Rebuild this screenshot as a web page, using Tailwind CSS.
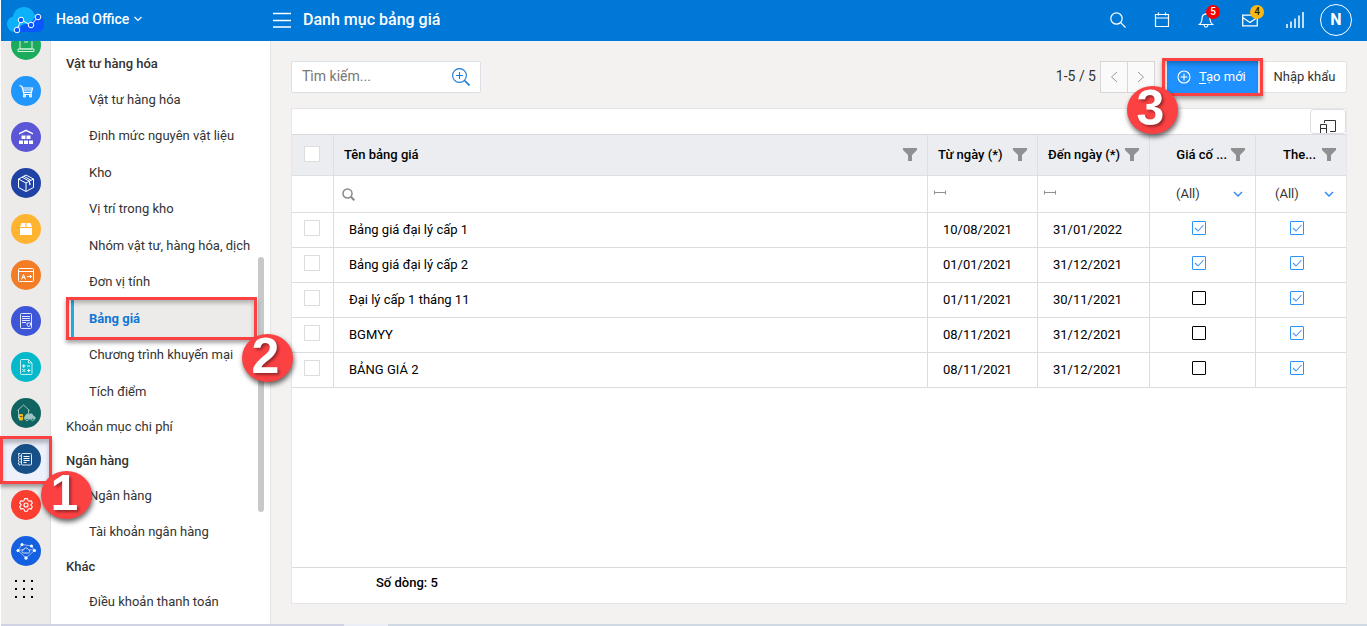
<!DOCTYPE html>
<html lang="vi">
<head>
<meta charset="utf-8">
<title>Danh mục bảng giá</title>
<script src="https://cdn.jsdelivr.net/npm/@tailwindcss/browser@4"></script>
</head>
<body class="relative flex h-screen flex-col overflow-hidden bg-white pl-px font-[Roboto,'Liberation_Sans',sans-serif] text-[13px] text-[#333]">

<svg class="hidden" xmlns="http://www.w3.org/2000/svg">
  <symbol id="funnel" viewBox="0 0 14 13"><path d="M0 0h14v2L9 7v6H5V7L0 2z" fill="#8f9091"/></symbol>
  <symbol id="tick" viewBox="0 0 14 14"><path d="M3 7l3 3 5.5-6" fill="none" stroke="#4a97f5" stroke-width="1.1"/></symbol>
  <symbol id="range" viewBox="0 0 12 5"><path d="M.5.5v4M11.5.5v4M.5 2.5h11" fill="none" stroke="#8f9091"/></symbol>
  <symbol id="down" viewBox="0 0 10 6"><path d="M1 1l4 4 4-4" fill="none" stroke="currentColor" stroke-width="1.4"/></symbol>
</svg>

<header class="flex h-[41px] shrink-0 items-center bg-[#0078d7] pb-0.5 text-white">
  <svg class="ml-1.5 h-7 w-[38px] shrink-0" viewBox="0 0 38 28">
    <path d="M8 26C3.500 26 0 22.500 0 18c0-4 2.500-6.500 6-7.500C7 4.500 11.500 1 17 1c5 0 9 3 10.500 7.500L32 13l-6 13z" fill="#0cb1f9"/>
    <path d="M11 26c1-5 4-8 8-8 3 0 5-1 7-4 2-4 8-5 10-1 3 6 0 13-6 13z" fill="#0a57ff"/>
    <path d="M10 24l4-10 10 5 7-8" fill="none" stroke="#fff" stroke-width="1"/>
    <g fill="#0a57ff" stroke="#fff" stroke-width="1"><circle cx="10" cy="24" r="2.800"/><circle cx="14" cy="14" r="2.800"/><circle cx="24" cy="19" r="2.800"/><circle cx="31" cy="11" r="2.800"/></g>
  </svg>
  <button class="ml-[11px] flex w-[217px] items-center gap-1 pb-0.5 text-sm font-medium">Head Office
    <svg class="h-1.5 w-2.5" viewBox="0 0 10 6"><path d="M1.500 1L5 4.500 8.500 1" fill="none" stroke="#fff" stroke-width="1.200"/></svg>
  </button>
  <button aria-label="Menu" class="h-4 w-[18px]"><svg class="h-4 w-[18px]" viewBox="0 0 18 16"><path d="M0 1.500h18M0 8.500h18M0 15h18" stroke="#fff" stroke-width="1.300"/></svg></button>
  <h1 class="ml-3 text-base font-medium">Danh mục bảng giá</h1>
  <div class="ml-auto flex items-center pr-[15px]">
    <button aria-label="Tìm" class="mr-7 size-4"><svg class="size-4" viewBox="0 0 16 16" fill="none" stroke="#fff" stroke-width="1.200"><circle cx="6.500" cy="6.500" r="5.700"/><path d="M10.700 10.700l4.800 4.800"/></svg></button>
    <button aria-label="Lịch" class="mr-7 size-4"><svg class="size-4" viewBox="0 0 16 16" fill="none" stroke="#fff" stroke-width="1.200"><path d="M1.500 2.500h13v12h-13zM1.500 6h13M4.500.5v3M11.500.5v3"/></svg></button>
    <button aria-label="Thông báo" class="relative mr-7 size-4"><svg class="size-4" viewBox="0 0 16 16" fill="none" stroke="#fff" stroke-width="1.200"><path d="M1.500 12.500c2-1.500 2.500-3 2.500-5.500 0-3 1.500-4.800 4-4.800s4 1.800 4 4.800c0 2.500.5 4 2.500 5.500zM6 13c.3 1.600 1 2.200 2 2.200s1.700-.6 2-2.200M8 1v1"/></svg>
      <span class="absolute -top-[7px] left-2 size-3.5 rounded-full bg-[#f90000] text-center text-[10px] leading-[14px] font-medium">5</span></button>
    <button aria-label="Thư" class="relative mr-7 size-4"><svg class="size-4" viewBox="0 0 16 16" fill="none" stroke="#fff" stroke-width="1.300"><path d="M.7 3.200h14.600v10.600H.7zM.7 5.500L8 10.500l7.300-5"/></svg>
      <span class="absolute -top-[7px] left-2 size-3.5 rounded-full bg-[#fdb913] text-center text-[10px] leading-[14px] font-medium text-[#222]">4</span></button>
    <svg class="mr-4 h-4 w-[18px]" viewBox="0 0 18 16" stroke="#fff" stroke-width="1.500"><path d="M1 12v4M5 9.500V16M9 6.500V16M13 3.500V16M17 0v16"/></svg>
    <button class="size-8 rounded-full border border-white text-base font-bold">N</button>
  </div>
</header>

<div class="flex min-h-0 flex-1">
  <nav aria-label="Phân hệ" class="w-[50px] shrink-0 overflow-hidden border-r border-[#dedede] bg-[#ecebea]">
    <div class="-mt-[19px] flex flex-col">
      <a href="#" aria-label="Bán hàng" class="flex h-[46px] items-center justify-center"><svg class="size-[30px] rounded-full bg-[#1cab5d]" viewBox="0 0 30 30" fill="none" stroke="#d4f2e0"><path d="M9 9h12v10H9zM7 19h16v2.500H7zM13 12h4"/></svg></a>
      <a href="#" aria-label="Mua hàng" class="flex h-[46px] items-center justify-center"><svg class="size-[30px] rounded-full bg-[#2196fd]" viewBox="0 0 30 30" fill="none" stroke="#fff" stroke-width="1.200"><path d="M8.500 9.500l2.500 1 2 8h7l1.500-6.500H12M12.500 14h8.500M13 16.300h7.500"/><circle cx="13.500" cy="20" r="1"/><circle cx="19.500" cy="20" r="1"/></svg></a>
      <a href="#" aria-label="Kho" class="flex h-[46px] items-center justify-center"><svg class="size-[30px] rounded-full bg-[#5b56d6]" viewBox="0 0 30 30" fill="#fff"><path d="M15 7.500l7 3.500v1.500L15 9.200l-7 3.300V11zM10.500 13.500h4V17h-4zM15.500 13.500h4V17h-4zM8 18.500h4V22H8zM13 18.500h4V22h-4zM18 18.500h4V22h-4z"/></svg></a>
      <a href="#" aria-label="Hàng hóa" class="flex h-[46px] items-center justify-center"><svg class="size-[30px] rounded-full bg-[#1f42a5]" viewBox="0 0 30 30" fill="none" stroke="#fff"><path d="M15 7l7.500 4v8.500L15 23.500l-7.500-4V11zM7.500 11l7.500 4 7.500-4M15 15v8.500M11 9.200l7.500 4v3.500l1.500-1M12.800 8.200l7 4"/></svg></a>
      <a href="#" aria-label="Đóng gói" class="flex h-[46px] items-center justify-center"><svg class="size-[30px] rounded-full bg-[#ffb431]" viewBox="0 0 30 30" fill="#fff"><path d="M10.500 9h4v4H9zM15.500 9h4l1.500 4h-5.500zM9 14h12v7H9z"/></svg></a>
      <a href="#" aria-label="Xuất" class="flex h-[46px] items-center justify-center"><svg class="size-[30px] rounded-full bg-[#f27d26]" viewBox="0 0 30 30" fill="none" stroke="#fff"><rect x="7.500" y="8.500" width="15" height="13" rx="1"/><path d="M7.500 11.500h15M10.500 19.500l2-5 2 5M11 17.500h3M16 16.500h4.500M19 15l1.500 1.500L19 18"/></svg></a>
      <a href="#" aria-label="Chứng từ" class="flex h-[46px] items-center justify-center"><svg class="size-[30px] rounded-full bg-[#3d56d6]" viewBox="0 0 30 30" fill="none" stroke="#e2e7ff"><rect x="9.500" y="7.500" width="11" height="15" rx="1"/><path d="M11 10.500h8M11 12.500h8M11 14.500h8M11 16.500h4M16 17h3.500v2L17.700 21 16 19z"/></svg></a>
      <a href="#" aria-label="Tính toán" class="flex h-[46px] items-center justify-center"><svg class="size-[30px] rounded-full bg-[#05b9cb]" viewBox="0 0 30 30" fill="none" stroke="#fff"><path d="M10.500 7.500h7l3.500 3.500v10.500a1 1 0 01-1 1h-9.500a1 1 0 01-1-1v-13a1 1 0 011-1zM17.500 7.500V11H21" stroke="#c4f0f4"/><path d="M11 14h3.500M12.800 12.300v3.500M16 14h3M11.500 17.200l2.600 2.600M14.100 17.200l-2.600 2.600M16 18.500h3.500M17.800 16.800v3.500"/></svg></a>
      <a href="#" aria-label="Tài sản" class="flex h-[46px] items-center justify-center"><svg class="size-[30px] rounded-full bg-[#0f6360]" viewBox="0 0 30 30" fill="none" stroke="#9cc4c1"><path d="M6.500 12.500l6-5.500 6 5.500M7.500 12v8.500M17.500 12v3"/><path d="M14 18.500l2-2.500h5l1.500 2.500 1.500.5v2H13.500z" fill="#9cc4c1"/><path d="M8.500 16.500h3V22h-3z" fill="#f3ba1d" stroke="#f3ba1d"/><path d="M9 18.500h2.500" stroke="#6b5a1d"/><circle cx="16" cy="21.500" r="1.200" fill="#0f6360"/><circle cx="21.500" cy="21.500" r="1.200" fill="#0f6360"/></svg></a>
      <a href="#" aria-label="Danh mục" aria-current="page" class="flex h-[46px] items-center justify-center bg-[#ecf1fb]"><svg class="size-[30px] rounded-full bg-[#174f87]" viewBox="0 0 30 30" fill="none" stroke="#dfe9f4"><rect x="10.500" y="9.500" width="10" height="11.500" rx="1"/><rect x="7.500" y="9.500" width="1.500" height="11.500" stroke-dasharray="2 1"/><path stroke="#fff" stroke-width="1.200" d="M12.500 12.500h6M12.500 14.500h6M12.500 16.500h6M12.500 18.500h3"/></svg></a>
      <a href="#" aria-label="Thiết lập" class="flex h-[46px] items-center justify-center"><svg class="size-[30px] rounded-full bg-[#fb3e30]" viewBox="0 0 30 30" fill="none" stroke="#fff" stroke-width="1.200" stroke-linejoin="round"><path d="M13.500 9h3l.6 2 1.500.9 2-.6 1.500 2.600-1.500 1.500v1.200l1.500 1.500-1.500 2.600-2-.6-1.500.9-.6 2h-3l-.6-2-1.500-.9-2 .6-1.500-2.600 1.500-1.500v-1.200l-1.500-1.500 1.500-2.600 2 .6 1.500-.9z" transform="translate(1.500 .5) scale(.9)"/><circle cx="15" cy="15" r="2"/></svg></a>
      <a href="#" aria-label="Kết nối" class="flex h-[46px] items-center justify-center"><svg class="size-[30px] rounded-full bg-[#1560e0]" viewBox="0 0 30 30" fill="none" stroke="#b9d0fa" stroke-width=".8"><path d="M11 8.500l9.500 1.500 3 4.500L15 22l-8-7.500zM7 14.500l5-1M23.500 14.500l-5-1"/><path d="M12.500 17a1.500 1.500 0 010-3 2.500 2.500 0 014.800-.5 1.800 1.800 0 01.2 3.500z" stroke="#fff"/><g fill="#fff" stroke="none"><circle cx="11" cy="8.500" r="1.500"/><circle cx="20.500" cy="10" r="1.500"/><circle cx="23.500" cy="14.500" r="1.500"/><circle cx="15" cy="22" r="1.700"/><circle cx="7" cy="14.500" r="1.500"/></g></svg></a>
      <button aria-label="Ứng dụng" class="mt-1.5 ml-3.5 h-5 w-5"><svg class="size-5" viewBox="0 0 20 20" fill="#000"><path d="M0 0h2v2H0zM8 0h2v2H8zM16 0h2v2h-2zM0 8h2v2H0zM8 8h2v2H8zM16 8h2v2h-2zM0 16h2v2H0zM8 16h2v2H8zM16 16h2v2h-2z"/></svg></button>
    </div>
  </nav>

  <aside class="flex w-[220px] shrink-0 overflow-hidden border-r border-[#e3e3e3] whitespace-nowrap">
    <div class="min-w-0 flex-1 pt-1.5 pl-[15px]">
      <h2 class="flex h-[34px] items-center font-medium">Vật tư hàng hóa</h2>
      <ul class="grid h-[329px] grid-rows-9">
        <li class="flex items-center pl-[23px]"><a href="#">Vật tư hàng hóa</a></li>
        <li class="flex items-center pl-[23px]"><a href="#">Định mức nguyên vật liệu</a></li>
        <li class="flex items-center pl-[23px]"><a href="#">Kho</a></li>
        <li class="flex items-center pl-[23px]"><a href="#">Vị trí trong kho</a></li>
        <li class="flex items-center pl-[23px]"><a href="#">Nhóm vật tư, hàng hóa, dịch</a></li>
        <li class="flex items-center pl-[23px]"><a href="#">Đơn vị tính</a></li>
        <li class="ml-[5px] flex items-center border-l-3 border-[#29abe2] bg-[#ecebea] pl-[15px] font-bold text-[#1177d6]"><a href="#">Bảng giá</a></li>
        <li class="flex items-center pl-[23px]"><a href="#">Chương trình khuyến mại</a></li>
        <li class="flex items-center pl-[23px]"><a href="#">Tích điểm</a></li>
      </ul>
      <a href="#" class="flex h-[34px] items-center">Khoản mục chi phí</a>
      <h2 class="flex h-[34px] items-center font-medium">Ngân hàng</h2>
      <ul>
        <li class="flex h-9 items-center pl-[23px]"><a href="#">Ngân hàng</a></li>
        <li class="flex h-9 items-center pl-[23px]"><a href="#">Tài khoản ngân hàng</a></li>
      </ul>
      <h2 class="flex h-[34px] items-center font-medium">Khác</h2>
      <ul>
        <li class="flex h-9 items-center pl-[23px]"><a href="#">Điều khoản thanh toán</a></li>
      </ul>
    </div>
    <div class="mt-[216px] mr-1.5 ml-1 h-[255px] w-1.5 rounded-full bg-[#c8c8c8]"></div>
  </aside>

  <main class="flex min-w-0 flex-1 flex-col bg-[#f3f2f1] px-5 pt-5 pb-5">
    <div class="flex h-8 items-center">
      <label class="flex h-8 w-[190px] items-center rounded-xs border border-[#dcdfe3] bg-white pr-2.5 pl-2.5">
        <input type="text" aria-label="Tìm kiếm" placeholder="Tìm kiếm..." class="min-w-0 flex-1 pb-0.5 text-sm outline-none placeholder:text-[#777]">
        <svg class="size-[18px]" viewBox="0 0 18 18" fill="none" stroke="#1a77d2" stroke-width="1.100"><circle cx="7.500" cy="7.500" r="6.900"/><path d="M4 7.500h7M7.500 4v7"/><path stroke-width="1.600" d="M12.500 12.500l5 5"/></svg>
      </label>
      <span class="ml-auto pb-0.5 text-sm">1-5 / 5</span>
      <div class="ml-1 flex h-8 w-[55px] border border-[#d6d6d6] bg-[#fafafa] text-[#999]">
        <button aria-label="Trang trước" class="flex flex-1 items-center justify-center border-r border-[#d6d6d6]"><svg class="h-3 w-2" viewBox="0 0 8 12"><path d="M7 1L1.500 6 7 11" fill="none" stroke="currentColor"/></svg></button>
        <button aria-label="Trang sau" class="flex flex-1 items-center justify-center"><svg class="h-3 w-2" viewBox="0 0 8 12"><path d="M1 1l5.500 5L1 11" fill="none" stroke="currentColor"/></svg></button>
      </div>
      <button class="ml-3 flex h-8 w-[91px] items-center gap-2 bg-[#1e90ff] pl-2.5 text-white"><svg class="size-3.5" viewBox="0 0 14 14" fill="none" stroke="#fff" stroke-width="1.100"><circle cx="7" cy="7" r="6"/><path d="M3.500 7h7M7 3.500v7"/></svg><span><u class="underline-offset-2">T</u>ạo mới</span></button>
      <button class="ml-1 h-8 w-[85px] rounded-xs border border-[#e2e2e2] bg-white">Nhập khẩu</button>
    </div>

    <section class="mt-[15px] flex min-h-0 flex-1 flex-col border border-[#e6e6e8] bg-white text-black">
      <div class="flex h-[25px] shrink-0 justify-end">
        <button aria-label="Chọn cột" class="flex h-[25px] w-9 items-end justify-center rounded-sm border border-[#dedfe2]"><svg class="h-3.5 w-[17px]" viewBox="0 0 17 14" fill="none" stroke="#333"><path d="M4.500 4V1.500h11v11H10M.5 14V5.500h6V14M.5 9.500h6"/></svg></button>
      </div>
      <table class="w-full table-fixed border-separate border-spacing-0 border-t border-[#d9dadd]">
        <colgroup><col class="w-[42px]"><col><col class="w-[110px]"><col class="w-28"><col class="w-[106px]"><col class="w-[90px]"></colgroup>
        <thead>
          <tr class="h-[41px] bg-[#ebedf1] text-left *:border-b *:border-[#dcdfe3] *:p-0 *:font-medium">
            <th class="border-r"><input type="checkbox" aria-label="Chọn tất cả" class="mb-0.5 ml-3 block size-4 appearance-none border border-[#ddd] bg-white"></th>
            <th class="border-r"><div class="flex items-center justify-between px-2.5">Tên bảng giá<svg class="mb-0.5 h-[13px] w-3.5"><use href="#funnel"/></svg></div></th>
            <th class="border-r"><div class="flex items-center justify-between px-2.5">Từ ngày (*)<svg class="mb-0.5 h-[13px] w-3.5"><use href="#funnel"/></svg></div></th>
            <th class="border-r"><div class="flex items-center justify-between px-2.5">Đến ngày (*)<svg class="mb-0.5 h-[13px] w-3.5"><use href="#funnel"/></svg></div></th>
            <th class="border-r"><div class="flex items-center justify-end gap-1 px-2.5">Giá cố ...<svg class="mb-0.5 h-[13px] w-3.5"><use href="#funnel"/></svg></div></th>
            <th><div class="flex items-center justify-end gap-1.5 px-2.5">The...<svg class="mb-0.5 h-[13px] w-3.5"><use href="#funnel"/></svg></div></th>
          </tr>
          <tr class="h-[37px] *:border-b *:border-[#dcdfe3] *:p-0">
            <td class="border-r"></td>
            <td class="border-r"><label class="flex items-center gap-2 pl-2"><svg class="size-[13px]" viewBox="0 0 13 13" fill="none" stroke="#8a8a8a" stroke-width="1.500"><circle cx="5.500" cy="5.500" r="4.500"/><path stroke-width="2" d="M8.800 8.800l3.500 3.500"/></svg><input type="text" aria-label="Lọc tên bảng giá" class="h-6 min-w-0 flex-1 outline-none"></label></td>
            <td class="border-r"><label class="flex items-center gap-2 pl-1.5"><svg class="mb-1 h-[5px] w-3"><use href="#range"/></svg><input type="text" aria-label="Lọc từ ngày" class="h-6 min-w-0 flex-1 outline-none"></label></td>
            <td class="border-r"><label class="flex items-center gap-2 pl-1.5"><svg class="mb-1 h-[5px] w-3"><use href="#range"/></svg><input type="text" aria-label="Lọc đến ngày" class="h-6 min-w-0 flex-1 outline-none"></label></td>
            <td class="border-r"><div class="relative flex items-center"><select aria-label="Lọc giá cố định" class="w-full appearance-none pl-[26px] text-[#333]"><option>(All)</option></select><svg class="pointer-events-none absolute right-3 h-1.5 w-2.5 text-[#2f86f6]"><use href="#down"/></svg></div></td>
            <td><div class="relative flex items-center"><select aria-label="Lọc theo dõi" class="w-full appearance-none pl-[19px] text-[#333]"><option>(All)</option></select><svg class="pointer-events-none absolute right-3 h-1.5 w-2.5 text-[#2f86f6]"><use href="#down"/></svg></div></td>
          </tr>
        </thead>
        <tbody id="rows"></tbody>
      </table>
      <div class="flex-1"></div>
      <footer class="h-9 shrink-0 border-t border-[#d9dadd] pt-1 pl-[84px] leading-[22px] font-medium">Số dòng: 5</footer>
    </section>
  </main>
</div>

<div class="flex h-0.5 shrink-0 bg-[#cfd9e4]"><div class="w-[343px] bg-[#cfd3e4]"></div><div class="w-11 bg-[#eceef5]"></div></div>

<!-- Step markers of the guide -->
<div class="pointer-events-none absolute inset-0 font-['Liberation_Sans',sans-serif] text-[50px] font-bold text-white">
  <div class="absolute top-[436px] left-0 h-12 w-[52px] border-3 border-[#fc4143] shadow-[0_3px_4px_rgba(0,0,0,0.35),inset_0_4px_4px_rgba(0,0,0,0.25)]"></div>
  <div class="absolute top-[297px] left-[66px] h-[43px] w-[191px] border-3 border-[#fc4143] shadow-[0_3px_4px_rgba(0,0,0,0.35),inset_0_3px_4px_rgba(0,0,0,0.25)]"></div>
  <div class="absolute top-[58px] right-[104px] h-[38px] w-[101px] border-3 border-[#fc4143] shadow-[0_3px_4px_rgba(0,0,0,0.35),inset_0_3px_4px_rgba(0,0,0,0.25)]"></div>
  <div class="absolute top-[471px] left-[41px] flex h-12 w-[51px] items-center justify-center rounded-[50%] bg-[#fc4143] pr-1 pb-1 shadow-[1px_3px_5px_rgba(0,0,0,0.6)] text-shadow-[2px_2px_3px_rgba(0,0,0,0.4)]">1</div>
  <div class="absolute top-[334px] left-[242px] flex h-12 w-[51px] items-center justify-center rounded-[50%] bg-[#fc4143] pr-1 pb-1 shadow-[1px_3px_5px_rgba(0,0,0,0.6)] text-shadow-[2px_2px_3px_rgba(0,0,0,0.4)]">2</div>
  <div class="absolute top-[86px] right-[189px] flex h-12 w-[51px] items-center justify-center rounded-[50%] bg-[#fc4143] pr-1 pb-1 shadow-[1px_3px_5px_rgba(0,0,0,0.6)] text-shadow-[2px_2px_3px_rgba(0,0,0,0.4)]">3</div>
</div>

<script>
const data = [
  ['Bảng giá đại lý cấp 1', '10/08/2021', '31/01/2022', true],
  ['Bảng giá đại lý cấp 2', '01/01/2021', '31/12/2021', true],
  ['Đại lý cấp 1 tháng 11', '01/11/2021', '30/11/2021', false],
  ['BGMYY', '08/11/2021', '31/12/2021', false],
  ['BẢNG GIÁ 2', '08/11/2021', '31/12/2021', false],
];
const box = (on, label) => `<span class="mr-2 mb-1 grid place-items-center"><input type="checkbox" aria-label="${label}" ${on ? 'checked' : ''} class="col-start-1 row-start-1 size-3.5 appearance-none rounded-[1px] border border-black checked:border-[#2b93fa]">${on ? '<svg class="pointer-events-none col-start-1 row-start-1 size-3.5"><use href="#tick"/></svg>' : ''}</span>`;
document.getElementById('rows').innerHTML = data.map(([name, from, to, fixed]) => `
<tr class="h-[35px] *:border-b *:border-[#dcdcdf] *:p-0">
  <td class="border-r"><input type="checkbox" aria-label="Chọn ${name}" class="mb-1 ml-3 block size-4 appearance-none border border-[#ddd] bg-white"></td>
  <td class="border-r"><div class="pl-[15px]">${name}</div></td>
  <td class="border-r"><div class="pl-[15px]">${from}</div></td>
  <td class="border-r"><div class="pl-[15px]">${to}</div></td>
  <td class="border-r">${box(fixed, 'Giá cố định')}</td>
  <td>${box(true, 'Theo dõi')}</td>
</tr>`).join('');
</script>
</body>
</html>
